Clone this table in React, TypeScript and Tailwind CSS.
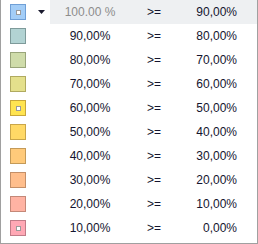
const rows = [
  { fill: "bg-[#a3cdf7]", border: "border-[#6f9fd6]", from: "100.00 %", to: "90,00%", marker: true, active: true },
  { fill: "bg-[#b2d3d3]", border: "border-[#7e9a9a]", from: "90,00%", to: "80,00%" },
  { fill: "bg-[#cfdcaa]", border: "border-[#99a57a]", from: "80,00%", to: "70,00%" },
  { fill: "bg-[#e4e08c]", border: "border-[#b0aa60]", from: "70,00%", to: "60,00%" },
  { fill: "bg-[#ffe450]", border: "border-[#c8a73a]", from: "60,00%", to: "50,00%", marker: true },
  { fill: "bg-[#ffd966]", border: "border-[#c9a64a]", from: "50,00%", to: "40,00%" },
  { fill: "bg-[#ffca7a]", border: "border-[#c49a58]", from: "40,00%", to: "30,00%" },
  { fill: "bg-[#ffbe8c]", border: "border-[#c48f68]", from: "30,00%", to: "20,00%" },
  { fill: "bg-[#ffb3a3]", border: "border-[#c48878]", from: "20,00%", to: "10,00%" },
  { fill: "bg-[#ffa8b5]", border: "border-[#c07c88]", from: "10,00%", to: "0,00%", marker: true },
];

export default function App() {
  return (
    <div
      className="w-[258px] h-[244px] bg-white border-x border-b border-[#a0a0a0] text-[12px] text-[#14142e]"
      style={{ fontFamily: '"Liberation Sans", Arial, sans-serif' }}
    >
      {rows.map((r, i) => (
        <div key={i} className="flex h-6 items-center">
          <div className="w-[49px] h-full flex items-center pl-[9px]">
            <div className={`w-4 h-4 border ${r.fill} ${r.border} flex items-center justify-center`}>
              {r.marker && <div className="w-[5px] h-[5px] bg-white border border-[#9a9a9a]" />}
            </div>
            {r.active && (
              <svg width="7" height="4" viewBox="0 0 7 4" className="ml-3">
                <path d="M0 0H7L3.5 4Z" fill="#1a1a2e" />
              </svg>
            )}
          </div>
          <div className={`flex-1 h-full flex items-center ${r.active ? "bg-[#eef0f2]" : ""}`}>
            <div className={`w-[80px] text-center ${r.active ? "text-[#8c8c8c]" : ""}`}>{r.from}</div>
            <div className="w-[50px] pl-[17px]">&gt;=</div>
            <div className="flex-1 text-right pr-5">{r.to}</div>
          </div>
        </div>
      ))}
    </div>
  );
}
